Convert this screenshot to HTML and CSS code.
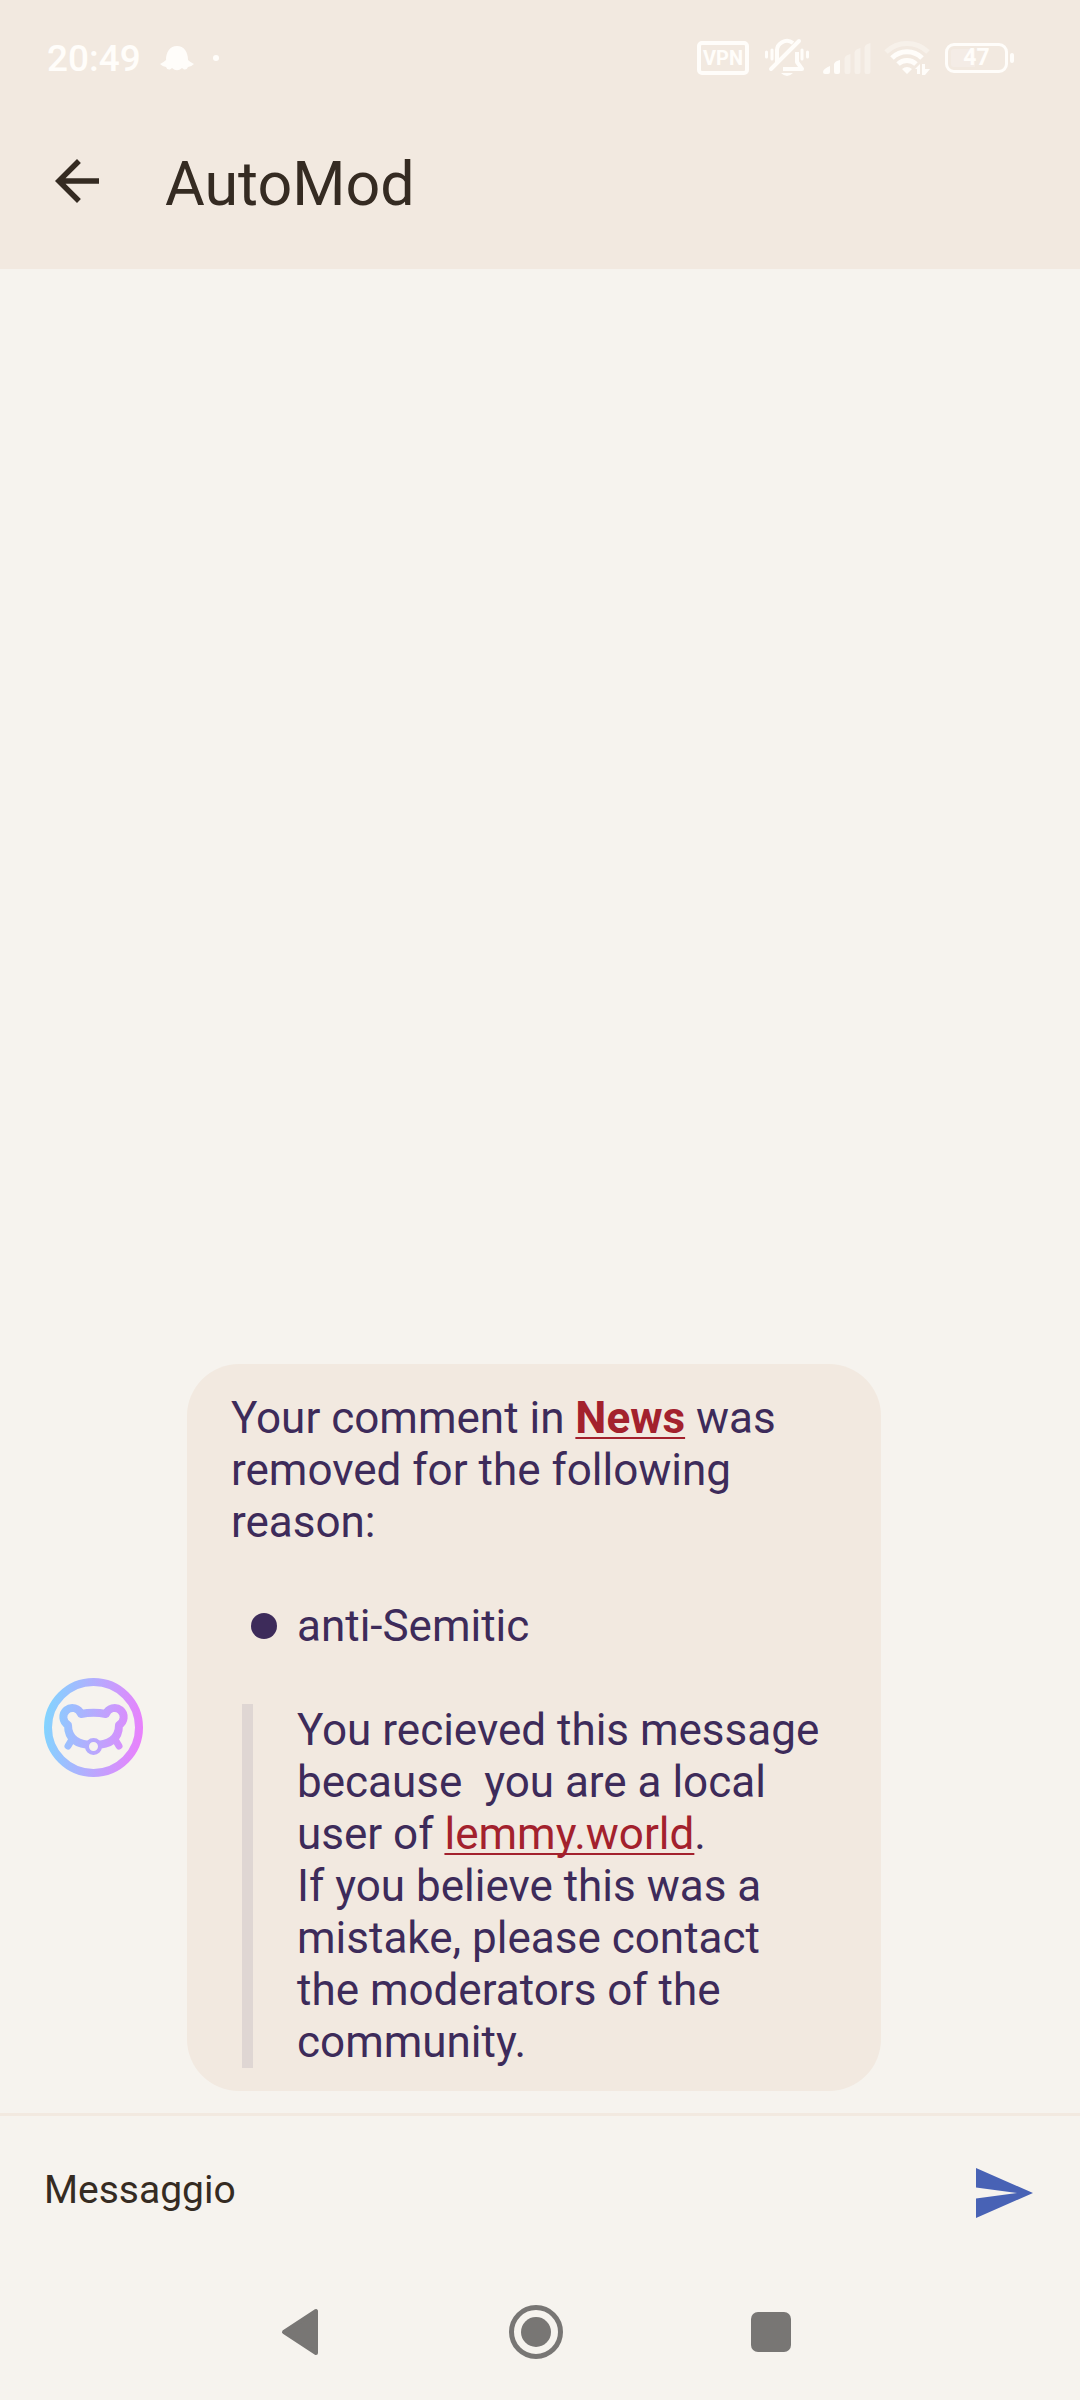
FILE: index.html
```html
<!DOCTYPE html>
<html lang="it">
<head>
<meta charset="utf-8">
<meta name="viewport" content="width=device-width, initial-scale=1">
<title>AutoMod</title>
<link rel="stylesheet" href="styles.css">
</head>
<body>
<div class="app">
  <div class="status-bar">
    <div class="status-left">
      <time class="clock">20:49</time>
      <svg class="hat" viewBox="0 0 36 26" width="36" height="26" aria-hidden="true"><path d="M7 15C7 7 11 1 18 1s11 6 11 14q2 2 6 4-3 3-6 3-1 3-4 2.500l-2-1.500q-5 4.500-10 0l-2 1.500q-3 .5-4-2.500-3 0-6-3 4-2 6-4z"/></svg>
      <span class="dot"></span>
    </div>
    <div class="status-right">
      <span class="vpn">VPN</span>
      <svg class="muted" viewBox="0 0 44 40" width="44" height="40" aria-hidden="true">
        <path fill="none" stroke="currentColor" stroke-width="4" d="M12 24V14a10 10 0 0 1 16-9"/>
        <path fill="none" stroke="currentColor" stroke-width="4" stroke-linejoin="round" d="M18 31h19l-5-7V14"/>
        <path fill="none" stroke="currentColor" stroke-width="4" stroke-linecap="round" d="M6 31 34 3"/>
        <path d="M16 35h12q-6 6-12 0z"/>
        <path fill="none" stroke="currentColor" stroke-width="3" stroke-linecap="round" d="M1.500 14v5M7 12v9M37 12v9M42.500 14v5"/>
      </svg>
      <svg class="signal" viewBox="0 0 48 31" width="48" height="31" aria-hidden="true">
        <path d="M0 29q0-3 7-6v6q0 2-2 2H2q-2 0-2-2zM11 21q1-3 6-4v12q0 2-2 2h-2q-2 0-2-2z"/>
        <path opacity=".4" d="M21.500 15q1-3 6-4v18q0 2-2 2h-2q-2 0-2-2zM31.500 9q1-3 6-4v24q0 2-2 2h-2q-2 0-2-2zM41.500 4q1-3 6-4v29q0 2-2 2h-2q-2 0-2-2z"/>
      </svg>
      <svg class="wifi" viewBox="0 0 46 36" width="46" height="36" aria-hidden="true">
        <g fill="none" stroke="currentColor" stroke-width="5"><path opacity=".4" d="M2 12a30 30 0 0 1 42 0"/><path d="M8 18a21 21 0 0 1 30 0M14 24a13 13 0 0 1 18 0"/></g>
        <path d="M18 29q5-4 10 0l-5 5zM31 29l5-5v10h-3v-5zM38 24h3v5h5l-5 6h-3z"/>
      </svg>
      <span class="battery"><span class="battery-body">47</span><span class="battery-tip"></span></span>
    </div>
  </div>

  <header class="app-bar">
    <button class="icon-button" type="button" aria-label="Indietro">
      <svg viewBox="0 0 24 24" width="66" height="66" aria-hidden="true"><path d="M20 11H7.830l5.590-5.590L12 4l-8 8 8 8 1.410-1.410L7.830 13H20z"/></svg>
    </button>
    <h1 class="title">AutoMod</h1>
  </header>

  <main class="conversation">
    <article class="message">
      <svg class="avatar" viewBox="0 0 99 99" width="99" height="99" role="img" aria-label="AutoMod">
        <defs><linearGradient id="tint" gradientUnits="userSpaceOnUse" x1="0" y1="45" x2="99" y2="55"><stop offset="0" stop-color="#82d4ff"/><stop offset="1" stop-color="#ea80fc"/></linearGradient></defs>
        <g fill="none" stroke="url(#tint)" stroke-width="8">
          <circle cx="49.500" cy="49.500" r="45.500"/>
          <path stroke-linejoin="round" d="M37 36q12.500-2.500 25 0A9.100 9.100 0 1 1 75 47C75 60 67 67 49.500 67S24 60 24 47A9.100 9.100 0 1 1 37 36z"/>
          <path stroke-width="7" stroke-linecap="round" d="M27 63l-3 5M72 63l3 5"/>
        </g>
        <circle cx="49.500" cy="68.500" r="6.500" fill="#f6f3ee" stroke="url(#tint)" stroke-width="4"/>
      </svg>
      <div class="bubble">
        <p>Your comment in <a href="#news"><strong>News</strong></a> was removed for the following reason:</p>
        <ul><li>anti-Semitic</li></ul>
        <blockquote>You recieved this message because&nbsp; you are a local user of <a href="#lemmy">lemmy.world</a>.<br>If you believe this was a mistake, please contact the moderators of the community.</blockquote>
      </div>
    </article>
  </main>

  <form class="composer">
    <input class="message-input" type="text" placeholder="Messaggio" aria-label="Messaggio">
    <button class="icon-button send" type="button" aria-label="Invia">
      <svg viewBox="0 0 57 50" width="57" height="50" aria-hidden="true"><path d="M0 0 57 25 0 50V30.500L41 25 0 19.500z"/></svg>
    </button>
  </form>

  <nav class="system-nav" aria-label="Navigazione">
    <button class="icon-button" type="button" aria-label="Indietro"><svg viewBox="0 0 54 54" width="54" height="54"><path stroke="currentColor" stroke-width="4" stroke-linejoin="round" d="M10 27 42 6v42z"/></svg></button>
    <button class="icon-button" type="button" aria-label="Home"><svg viewBox="0 0 54 54" width="54" height="54"><circle cx="27" cy="27" r="24.500" fill="none" stroke="currentColor" stroke-width="5"/><circle cx="27" cy="27" r="15"/></svg></button>
    <button class="icon-button" type="button" aria-label="Recenti"><svg viewBox="0 0 54 54" width="54" height="54"><rect x="7" y="7" width="40" height="40" rx="7"/></svg></button>
  </nav>
</div>
</body>
</html>
```
FILE: styles.css
```css
* { box-sizing: border-box; margin: 0; padding: 0; }

body {
  background: #f6f3ee;
  color: #352b22;
  font-family: Roboto, "Liberation Sans", sans-serif;
}

svg { display: block; fill: currentColor; }

.app { display: flex; flex-direction: column; min-height: 100vh; }

.icon-button {
  display: flex;
  border: 0;
  background: none;
  color: inherit;
  cursor: pointer;
}

/* Status bar */
.status-bar {
  display: flex;
  justify-content: space-between;
  align-items: center;
  height: 116px;
  padding: 0 66px 0 47px;
  background: #f2e9e0;
  color: #fffdfa;
}
.status-left, .status-right { display: flex; align-items: center; }
.clock { padding-top: 2px; font-size: 37px; font-weight: 500; line-height: 44px; }
.hat { margin-left: 18px; }
.dot { width: 6px; height: 6px; margin-left: 18px; border-radius: 50%; background: currentColor; }
.vpn {
  width: 52px;
  border: 4px solid;
  border-radius: 5px;
  font-size: 20px;
  font-weight: 700;
  line-height: 26px;
  text-align: center;
}
.muted { margin-left: 16px; }
.signal { margin-left: 14px; }
.wifi { margin-left: 13px; }
.battery { display: flex; align-items: center; gap: 2px; margin-left: 15px; }
.battery-body {
  width: 63px;
  border: 3px solid;
  border-radius: 9px;
  background: linear-gradient(90deg, #f4ece6 47%, transparent 47%) content-box;
  padding: 3px;
  font-size: 23px;
  font-weight: 700;
  line-height: 18px;
  text-align: center;
}
.battery-tip { width: 4px; height: 10px; border-radius: 2px; background: currentColor; }

/* App bar */
.app-bar {
  display: flex;
  align-items: flex-start;
  gap: 55px;
  height: 153px;
  padding: 32px 44px 0;
  background: #f2e9e0;
}
.title { font-size: 61px; font-weight: 400; line-height: 72px; }

/* Conversation */
.conversation { display: flex; flex: 1; flex-direction: column; justify-content: flex-end; }
.message { display: flex; align-items: center; gap: 44px; padding: 22px 199px 22px 44px; }
.avatar { flex: none; }
.bubble {
  flex: 1;
  padding: 28px 52px 23px 44px;
  border-radius: 52px;
  background: #f2e9e0;
  color: #3d2b5a;
  font-size: 44px;
  line-height: 52px;
}
.bubble a { color: #a3212d; text-decoration-thickness: 2px; text-underline-offset: 4px; text-decoration-skip-ink: none; }
.bubble ul { margin: 52px 0; list-style: none; }
.bubble li { display: flex; align-items: center; gap: 20px; padding-left: 20px; }
.bubble li::before { content: ""; width: 26px; height: 26px; border-radius: 50%; background: currentColor; }
.bubble blockquote { margin: 0 0 0 11px; padding-left: 44px; border-left: 11px solid #dfd6d3; }

/* Composer */
.composer {
  display: flex;
  align-items: center;
  height: 151px;
  padding: 0 47px 0 44px;
  border-top: 3px solid #f2e9e0;
}
.message-input {
  flex: 1;
  min-width: 0;
  border: 0;
  outline: 0;
  background: none;
  color: inherit;
  font-family: inherit;
  font-size: 39px;
  line-height: 46px;
}
.message-input::placeholder { color: #352b22; opacity: 1; }
.send { padding-top: 6px; color: #4862b5; }

/* System navigation */
.system-nav {
  display: flex;
  justify-content: center;
  align-items: center;
  gap: 181px;
  height: 136px;
  padding-right: 8px;
  color: #787674;
}
```
